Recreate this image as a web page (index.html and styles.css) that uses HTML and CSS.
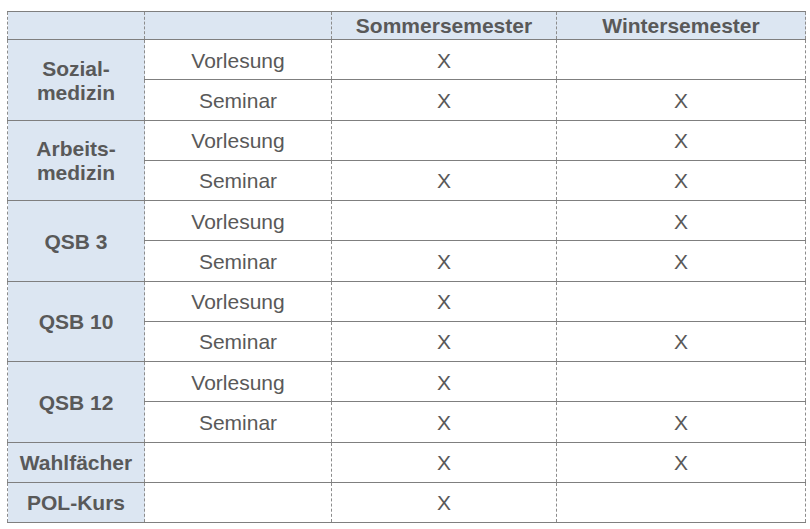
FILE: index.html
```html
<!DOCTYPE html>
<html lang="de">
<head>
<meta charset="utf-8">
<title>Semesterübersicht</title>
<link rel="stylesheet" href="styles.css">
</head>
<body>
<div class="wrap">
<table class="plan">
  <colgroup>
    <col class="c1"><col class="c2"><col class="c3"><col class="c4">
  </colgroup>
  <thead>
    <tr class="head">
      <th class="fach"></th>
      <th></th>
      <th>Sommersemester</th>
      <th>Wintersemester</th>
    </tr>
  </thead>
  <tbody>
    <tr><th class="fach two" rowspan="2">Sozial-<br>medizin</th><td>Vorlesung</td><td>X</td><td></td></tr>
    <tr><td>Seminar</td><td>X</td><td>X</td></tr>
    <tr><th class="fach two" rowspan="2">Arbeits-<br>medizin</th><td>Vorlesung</td><td></td><td>X</td></tr>
    <tr><td>Seminar</td><td>X</td><td>X</td></tr>
    <tr><th class="fach" rowspan="2">QSB 3</th><td>Vorlesung</td><td></td><td>X</td></tr>
    <tr><td>Seminar</td><td>X</td><td>X</td></tr>
    <tr><th class="fach" rowspan="2">QSB 10</th><td>Vorlesung</td><td>X</td><td></td></tr>
    <tr><td>Seminar</td><td>X</td><td>X</td></tr>
    <tr><th class="fach" rowspan="2">QSB 12</th><td>Vorlesung</td><td>X</td><td></td></tr>
    <tr><td>Seminar</td><td>X</td><td>X</td></tr>
    <tr><th class="fach">Wahlfächer</th><td></td><td>X</td><td>X</td></tr>
    <tr><th class="fach">POL-Kurs</th><td></td><td>X</td><td></td></tr>
  </tbody>
</table>
</div>
</body>
</html>
```

FILE: styles.css
```css
html, body {
  margin: 0;
  padding: 0;
  background: #ffffff;
}

.wrap {
  padding: 11px 0 0 7px;
}

.plan {
  border-collapse: collapse;
  width: 798px;
  table-layout: fixed;
  font-family: "Liberation Sans", Arial, sans-serif;
  font-size: 21px;
  color: #595959;
}

.c1 { width: 137px; }
.c2 { width: 187px; }
.c3 { width: 225px; }
.c4 { width: 249px; }

.plan th,
.plan td {
  border-top: 1px solid #7f7f7f;
  border-bottom: 1px solid #7f7f7f;
  border-left: 1px dashed #8c8c8c;
  border-right: 1px dashed #8c8c8c;
  padding: 2px 0 0 0;
  text-align: center;
  vertical-align: middle;
  height: 37.25px;
  line-height: 24px;
}

.plan th {
  font-weight: bold;
}

.plan td {
  font-weight: normal;
}

.head th {
  height: 27px;
  padding: 0;
  background: #dce6f2;
}

.fach {
  background: #dce6f2;
}
```
